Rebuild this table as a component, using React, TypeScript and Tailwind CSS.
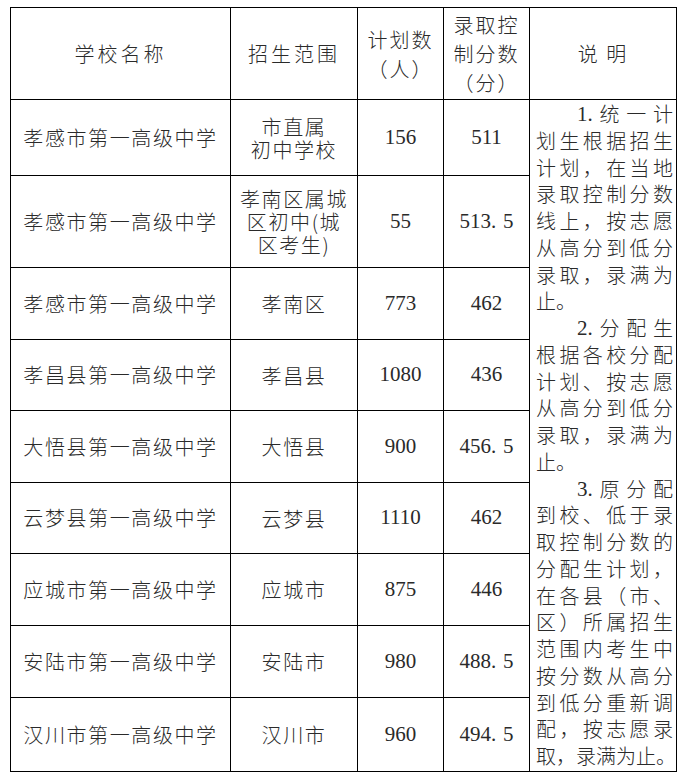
import React from 'react';

const rows: [string, string[], string, string][] = [
  ['孝感市第一高级中学', ['市直属', '初中学校'], '156', '511'],
  ['孝感市第一高级中学', ['孝南区属城', '区初中(城', '区考生)'], '55', '513.5'],
  ['孝感市第一高级中学', ['孝南区'], '773', '462'],
  ['孝昌县第一高级中学', ['孝昌县'], '1080', '436'],
  ['大悟县第一高级中学', ['大悟县'], '900', '456.5'],
  ['云梦县第一高级中学', ['云梦县'], '1110', '462'],
  ['应城市第一高级中学', ['应城市'], '875', '446'],
  ['安陆市第一高级中学', ['安陆市'], '980', '488.5'],
  ['汉川市第一高级中学', ['汉川市'], '960', '494.5'],
];

// 说明 column, line by line as it is laid out in the picture
type Line = { kind: 'full' | 'indent' | 'left'; tokens: string[] };

const split = (s: string) => Array.from(s);

const notes: Line[] = [
  { kind: 'indent', tokens: ['1.', '统', '一', '计'] },
  { kind: 'full', tokens: split('划生根据招生') },
  { kind: 'full', tokens: split('计划，在当地') },
  { kind: 'full', tokens: split('录取控制分数') },
  { kind: 'full', tokens: split('线上，按志愿') },
  { kind: 'full', tokens: split('从高分到低分') },
  { kind: 'full', tokens: split('录取，录满为') },
  { kind: 'left', tokens: ['止。'] },
  { kind: 'indent', tokens: ['2.', '分', '配', '生'] },
  { kind: 'full', tokens: split('根据各校分配') },
  { kind: 'full', tokens: split('计划、按志愿') },
  { kind: 'full', tokens: split('从高分到低分') },
  { kind: 'full', tokens: split('录取，录满为') },
  { kind: 'left', tokens: ['止。'] },
  { kind: 'indent', tokens: ['3.', '原', '分', '配'] },
  { kind: 'full', tokens: split('到校、低于录') },
  { kind: 'full', tokens: split('取控制分数的') },
  { kind: 'full', tokens: split('分配生计划，') },
  { kind: 'full', tokens: split('在各县（市、') },
  { kind: 'full', tokens: split('区）所属招生') },
  { kind: 'full', tokens: split('范围内考生中') },
  { kind: 'full', tokens: split('按分数从高分') },
  { kind: 'full', tokens: split('到低分重新调') },
  { kind: 'full', tokens: split('配，按志愿录') },
  { kind: 'full', tokens: split('取，录满为止。') },
];

function Num({ value }: { value: string }) {
  const [a, b] = value.split('.');
  return (
    <span className="font-['Liberation_Serif',serif] text-[21px]">
      {a}
      {b !== undefined && (
        <>
          <span className="inline-block w-[12px] text-left">.</span>
          {b}
        </>
      )}
    </span>
  );
}

function Token({ t }: { t: string }) {
  if (/^\d\.$/.test(t)) {
    return <span className="font-['Liberation_Serif',serif] text-[21px]">{t}</span>;
  }
  return <span>{t}</span>;
}

const cell = 'bg-white flex items-center justify-center text-center';

export default function App() {
  return (
    <div className="min-h-screen bg-white pt-[7px] pl-[10px] font-['Noto_Sans_CJK_SC',sans-serif] font-light text-[#2a2a2a]">
      <div className="grid w-[667px] h-[765px] bg-black p-px gap-px grid-cols-[219px_126px_85px_85px_146px] grid-rows-[91px_75px_91px_71px_70px_71px_70px_71px_71px_73px]">
        {/* header */}
        <div className={`${cell} text-[20px] tracking-[3px]`}>学校名称</div>
        <div className={`${cell} text-[20px] tracking-[3px]`}>招生范围</div>
        <div className={`${cell} whitespace-pre-line text-[20px] leading-[29px] tracking-[2px]`}>
          {'计划数\n（人）'}
        </div>
        <div className={`${cell} whitespace-pre-line text-[20px] leading-[29px] tracking-[2px]`}>
          {'录取控\n制分数\n（分）'}
        </div>
        <div className={`${cell} text-[20px] tracking-[2px]`}>说 明</div>

        {/* notes column spanning all body rows */}
        <div className="bg-white col-start-5 row-start-2 row-span-9 pl-[6px] pr-[3px] pt-[1px] text-[20px] leading-[26.75px]">
          {notes.map((line, i) => {
            if (line.kind === 'left') {
              return <div key={i}>{line.tokens.join('')}</div>;
            }
            return (
              <div
                key={i}
                className={`flex justify-between ${line.kind === 'indent' ? 'pl-[41px]' : ''}`}
              >
                {line.tokens.map((t, j) => (
                  <Token key={j} t={t} />
                ))}
              </div>
            );
          })}
        </div>

        {rows.map(([school, range, plan, score], i) => (
          <React.Fragment key={i}>
            <div className={`${cell} text-[20px] tracking-[1.6px]`}>{school}</div>
            <div className={`${cell} whitespace-pre-line text-[20px] leading-[23px] tracking-[1.6px]`}>
              {range.join('\n')}
            </div>
            <div className={cell}>
              <Num value={plan} />
            </div>
            <div className={cell}>
              <Num value={score} />
            </div>
          </React.Fragment>
        ))}
      </div>
    </div>
  );
}
